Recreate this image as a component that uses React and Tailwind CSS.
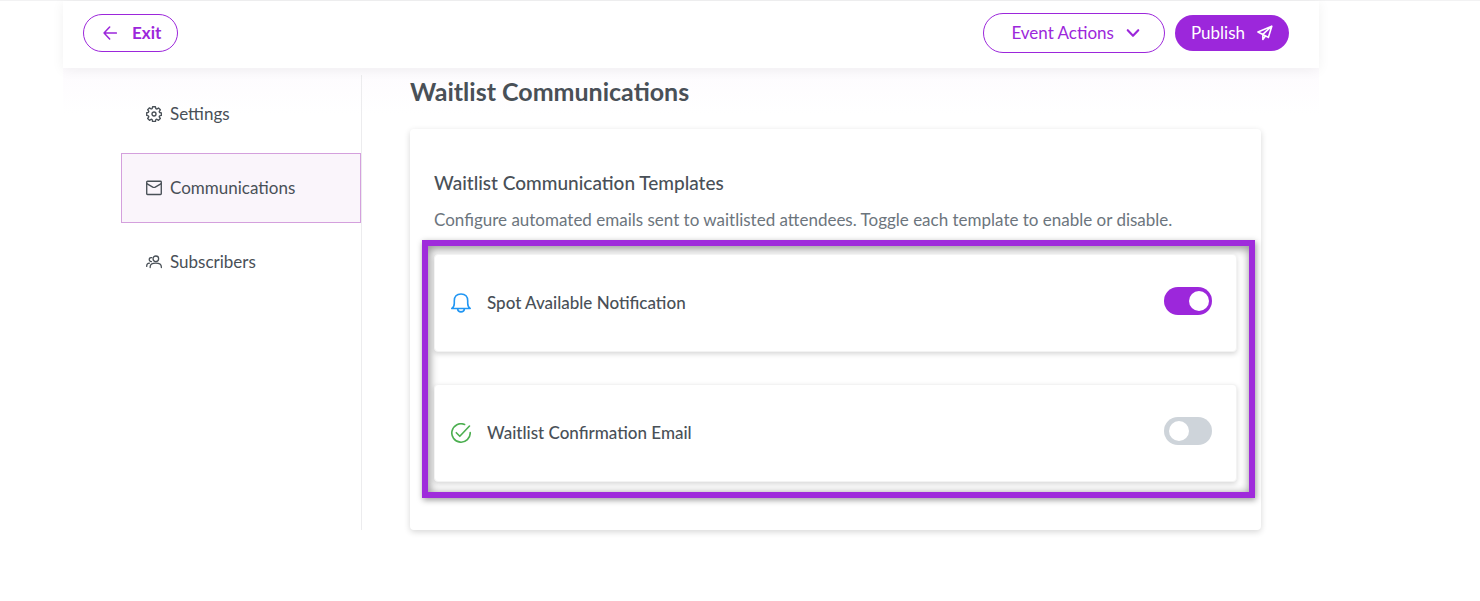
import { useState } from 'react';

const NAV_ITEMS = [
  { id: 'settings', label: 'Settings', icon: GearIcon },
  { id: 'communications', label: 'Communications', icon: MailIcon },
  { id: 'subscribers', label: 'Subscribers', icon: UsersIcon },
];

const TEMPLATES = [
  { id: 'spot-available', title: 'Spot Available Notification', icon: BellIcon, iconCls: 'text-[#2196f3]', enabled: true },
  { id: 'confirmation', title: 'Waitlist Confirmation Email', icon: CheckIcon, iconCls: 'text-[#4caf50]', enabled: false },
];

function Icon({ className, width = 1.4, children }) {
  return (
    <svg
      viewBox="0 0 20 20"
      className={className}
      fill="none"
      stroke="currentColor"
      strokeWidth={width}
      strokeLinecap="round"
      strokeLinejoin="round"
      aria-hidden="true"
    >
      {children}
    </svg>
  );
}

function GearIcon({ className }) {
  return (
    <Icon className={className} width={1.7}>
      <path d="M8.2 1h3.6l.5 2.4 1.2.5 2.1-1.4 2.3 2.3-1.4 2.1.5 1.2 2.2.5v3.2l-2.2.5-.5 1.2 1.4 2.1-2.3 2.3-2.1-1.4-1.2.5-.5 2.400H8.200l-.5-2.400-1.200-.5-2.100 1.400-2.300-2.300 1.400-2.100-.5-1.200L.9 11.800V8.400L3 7.900l.5-1.200-1.400-2.100 2.300-2.300 2.100 1.400 1.200-.5z" />
      <circle cx="10" cy="10" r="2.5" />
    </Icon>
  );
}

function MailIcon({ className }) {
  return (
    <Icon className={className} width={1.7}>
      <rect x="0.9" y="1.5" width="18.2" height="16.6" rx="1" />
      <path d="M1 4.500l7.400 4.300q1.600.8 3.200 0L19 4.500" />
    </Icon>
  );
}

function UsersIcon({ className }) {
  return (
    <Icon className={className} width={1.6}>
      <circle cx="12.3" cy="6" r="3.5" />
      <path d="M5.200 17v-.8c0-3 3-4.700 7-4.700s7 1.700 7 4.700v.8" />
      <path d="M7.200 4.500a2.500 2.500 0 1 0-.4 4.900M.9 15.500v-.8c0-1.800 1.200-3 3.400-3.200" />
    </Icon>
  );
}

function BellIcon({ className }) {
  return (
    <Icon className={className} width={1.6}>
      <path d="M.8 15.500h18.400c-1.800-1-2.500-2.600-2.500-5.200V7.800C16.700 3.400 14.400 1 10 1S3.300 3.400 3.300 7.800v2.500c0 2.600-.7 4.200-2.500 5.200z" />
      <path d="M6.600 15.800c.2 2 1.500 3.100 3.400 3.100s3.200-1.100 3.400-3.100" />
    </Icon>
  );
}

function CheckIcon({ className }) {
  return (
    <Icon className={className} width={1.6}>
      <path d="M13.600 1.500A9.200 9.200 0 1 0 19.200 9.500" />
      <path d="M5.300 9.700l3.500 3.600L18.500 3" />
    </Icon>
  );
}

function ArrowLeftIcon({ className }) {
  return (
    <Icon className={className} width={2.2}>
      <path d="M9.500 1.500L1.500 10l8 8.500M1.500 10h17.500" />
    </Icon>
  );
}

function ChevronDownIcon({ className }) {
  return (
    <Icon className={className} width={3}>
      <path d="M2.500 6L10 14l7.500-8" />
    </Icon>
  );
}

function SendIcon({ className }) {
  return (
    <Icon className={className} width={2}>
      <path d="M18.500 1.500L1.200 8.700l6.100 3.100zM18.500 1.500L14.200 15.500l-6.900-3.700zM7.300 11.800V18l3.300-4.200" />
    </Icon>
  );
}

function Header() {
  return (
    <header className="relative flex items-center justify-between bg-white pl-5 pr-[30px] pt-3 pb-[15px] shadow-[0_2px_12px_rgba(0,0,0,0.06)]">
      <button type="button" className="flex h-[38px] items-center gap-[15px] rounded-full border border-[#9c27db] pl-[19px] pr-4 font-bold text-[#9c27db]">
        <ArrowLeftIcon className="size-3.5" />
        Exit
      </button>
      <div className="flex items-center gap-2.5">
        <button type="button" className="flex h-10 items-center gap-3 rounded-full border border-[#9c27db] pl-[27px] pr-6 text-[#9c27db]">
          Event Actions
          <ChevronDownIcon className="size-3.5" />
        </button>
        <button type="button" className="flex h-9 items-center gap-3 rounded-full bg-[#9c27db] px-4 text-white">
          Publish
          <SendIcon className="size-4" />
        </button>
      </div>
    </header>
  );
}

function Sidebar() {
  return (
    <nav className="w-[241px] shrink-0 border-r border-[#ececee] pt-1">
      <ul className="space-y-1">
        {NAV_ITEMS.map(({ id, label, icon: ItemIcon }) => (
          <li key={id}>
            <a
              href={`#${id}`}
              className={`flex h-[70px] items-center gap-2 border px-6 ${
                id === 'communications' ? 'border-[#d4a0dd] bg-[#faf5fb]' : 'border-transparent'
              }`}
            >
              <ItemIcon className="size-4" />
              {label}
            </a>
          </li>
        ))}
      </ul>
    </nav>
  );
}

function TemplateRow({ template }) {
  const [enabled, setEnabled] = useState(template.enabled);
  const RowIcon = template.icon;

  return (
    <div className="flex h-[98px] items-center rounded border border-[#f3f3f3] bg-white pl-4 pr-6 shadow-[0_2px_5px_rgba(0,0,0,0.16)]">
      <RowIcon className={`size-5 shrink-0 ${template.iconCls}`} />
      <label htmlFor={template.id} className="ml-4 flex-1 font-medium">
        {template.title}
      </label>
      <input
        id={template.id}
        type="checkbox"
        role="switch"
        checked={enabled}
        onChange={e => setEnabled(e.target.checked)}
        className="relative mb-1 h-7 w-12 shrink-0 cursor-pointer appearance-none rounded-full bg-[#ced4da] before:absolute before:left-[5px] before:top-1 before:size-5 before:rounded-full before:bg-white checked:bg-[#9c27db] checked:before:translate-x-5"
      />
    </div>
  );
}

export default function App() {
  return (
    <div className="min-h-screen border-t border-[#f2f2f3] bg-white pl-[63px] pr-[161px] font-['Lato','Open_Sans',sans-serif] text-[17px] leading-6 text-[#495057]">
      <Header />
      <div className="flex bg-linear-to-b from-[#fdfbfe] to-white to-10% px-[58px] pt-[7px]">
        <Sidebar />
        <main className="ml-12 min-w-0 flex-1">
          <h1 className="mb-[22px] text-[25px] leading-8 font-bold">Waitlist Communications</h1>
          <section className="rounded bg-white px-6 pt-[42px] pb-8 shadow-[0_2px_6px_rgba(0,0,0,0.16)]">
            <h2 className="text-[19px] font-medium">Waitlist Communication Templates</h2>
            <p className="mt-[13px] text-[#6c757d]">
              Configure automated emails sent to waitlisted attendees. Toggle each template to enable or disable.
            </p>
            <div className="mt-2 -ml-3 -mr-[18px] space-y-8 border-6 border-[#9f2bdb] pt-2 pr-3 pb-2.5 pl-1.5 shadow-[1px_2px_6px_rgba(0,0,0,0.4),inset_1px_2px_8px_1px_rgba(0,0,0,0.42)]">
              {TEMPLATES.map(template => (
                <TemplateRow key={template.id} template={template} />
              ))}
            </div>
          </section>
        </main>
      </div>
    </div>
  );
}
